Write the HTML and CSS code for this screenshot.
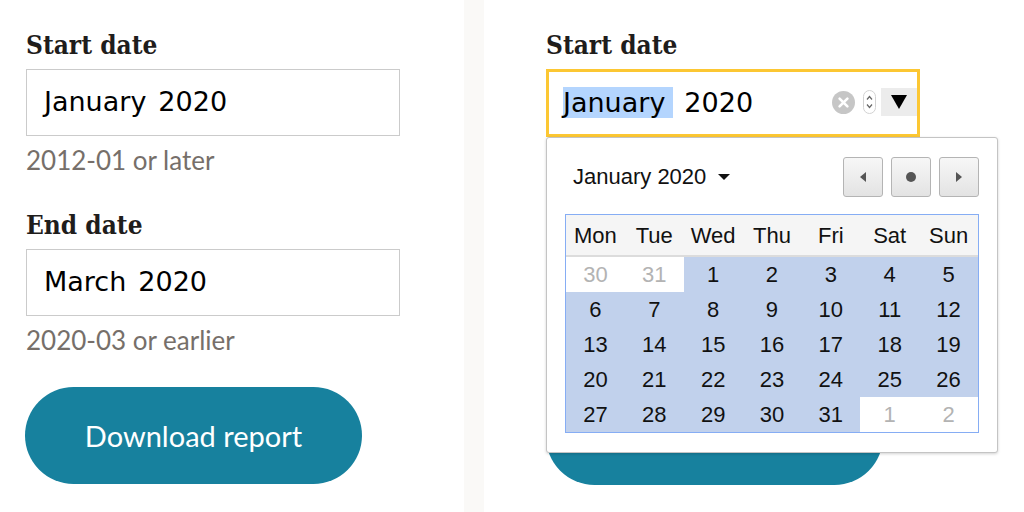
FILE: index.html
```html
<!DOCTYPE html>
<html lang="en">
<head>
<meta charset="utf-8">
<title>Date range</title>
<link rel="stylesheet" href="styles.css">
</head>
<body>
<div class="page">
  <section class="panel panel-left">
    <div class="field">
      <div class="label">Start date</div>
      <div class="input"><span class="seg">January</span><span class="seg">2020</span></div>
      <p class="hint">2012-01 or later</p>
    </div>
    <div class="field">
      <div class="label">End date</div>
      <div class="input"><span class="seg">March</span><span class="seg">2020</span></div>
      <p class="hint">2020-03 or earlier</p>
    </div>
    <button class="btn btn-left">Download report</button>
  </section>
  <div class="divider"></div>
  <section class="panel panel-right">
    <div class="field">
      <div class="label">Start date</div>
      <div class="input-wrap">
        <div class="input input-focus">
          <span class="seg seg-sel">January</span><span class="seg">2020</span>
          <span class="spacer"></span>
          <svg class="clear" width="23" height="23" viewBox="0 0 23 23"><circle cx="11.5" cy="11.5" r="11.5" fill="#c6c6c6"/><path d="M7.6 7.6l7.8 7.8M15.4 7.6l-7.8 7.8" stroke="#fff" stroke-width="2.6" stroke-linecap="round"/></svg>
          <svg class="spin" width="13" height="24" viewBox="0 0 13 24"><rect x="0.5" y="0.5" width="12" height="23" rx="6" fill="#fff" stroke="#d2d2d2"/><path d="M4 9.5l2.5-3 2.5 3M4 14.5l2.5 3 2.5-3" fill="none" stroke="#666" stroke-width="1.2"/></svg>
          <span class="drop"><svg width="16" height="14" viewBox="0 0 16 14"><path d="M0 0h16L8 14z" fill="#000"/></svg></span>
        </div>
        <div class="popup">
          <div class="popup-head">
            <div class="month">January 2020<svg class="caret" width="12" height="6" viewBox="0 0 12 6"><path d="M0 0h12L6 6z" fill="#111"/></svg></div>
            <div class="nav">
              <span class="nav-btn"><svg width="6" height="10" viewBox="0 0 6 10"><path d="M6 0v10L0 5z" fill="#555"/></svg></span>
              <span class="nav-btn"><svg width="10" height="10" viewBox="0 0 10 10"><circle cx="5" cy="5" r="5" fill="#555"/></svg></span>
              <span class="nav-btn"><svg width="6" height="10" viewBox="0 0 6 10"><path d="M0 0v10l6-5z" fill="#555"/></svg></span>
            </div>
          </div>
          <div class="cal">
            <div class="dow">Mon</div><div class="dow">Tue</div><div class="dow">Wed</div><div class="dow">Thu</div><div class="dow">Fri</div><div class="dow">Sat</div><div class="dow">Sun</div>
            <div class="day out">30</div><div class="day out">31</div><div class="day">1</div><div class="day">2</div><div class="day">3</div><div class="day">4</div><div class="day">5</div>
            <div class="day">6</div><div class="day">7</div><div class="day">8</div><div class="day">9</div><div class="day">10</div><div class="day">11</div><div class="day">12</div>
            <div class="day">13</div><div class="day">14</div><div class="day">15</div><div class="day">16</div><div class="day">17</div><div class="day">18</div><div class="day">19</div>
            <div class="day">20</div><div class="day">21</div><div class="day">22</div><div class="day">23</div><div class="day">24</div><div class="day">25</div><div class="day">26</div>
            <div class="day">27</div><div class="day">28</div><div class="day">29</div><div class="day">30</div><div class="day">31</div><div class="day out">1</div><div class="day out">2</div>
          </div>
        </div>
      </div>
      <p class="hint covered">2012-01 or later</p>
    </div>
    <div class="field covered">
      <div class="label">End date</div>
      <div class="input"><span class="seg">March</span><span class="seg">2020</span></div>
      <p class="hint">2020-03 or earlier</p>
    </div>
    <button class="btn"><span class="covered">Download report</span></button>
  </section>
</div>
</body>
</html>
```

FILE: styles.css
```css
* { box-sizing: border-box; }
html, body { margin: 0; padding: 0; background: #fff; }
body { width: 1024px; height: 512px; overflow: hidden; }

.page {
  display: flex;
  width: 1024px;
  height: 512px;
}

.panel {
  display: flex;
  flex-direction: column;
  padding-top: 30px;
  background: #fff;
}
.panel-left { width: 464px; padding-left: 26px; }
.panel-right { flex: 1; padding-left: 62px; }

.divider { width: 20px; background: #faf9f7; }

.field {
  display: flex;
  flex-direction: column;
  width: 374px;
  margin-bottom: 33px;
}

.covered { visibility: hidden; }

.label {
  font-family: "DejaVu Serif Condensed", "DejaVu Serif", serif;
  font-stretch: condensed;
  font-weight: bold;
  font-size: 26px;
  line-height: 30px;
  color: #1f1d1c;
  margin-bottom: 9px;
}

.input-wrap { position: relative; }

.input {
  display: flex;
  align-items: center;
  height: 67px;
  border: 1px solid #cbcbcb;
  padding-left: 17px;
  padding-bottom: 2px;
  font-family: "DejaVu Sans", Verdana, sans-serif;
  font-size: 27px;
  color: #000;
  background: #fff;
}
.input-focus {
  height: 68px;
  border: 3px solid #fcc733;
  padding-left: 14px;
  padding-right: 0;
  padding-bottom: 2px;
}

.seg { margin-right: 12px; }
.seg-sel { background: #b4d5fe; margin-right: 11px; padding-right: 8px; }
.spacer { flex: 1; }
.clear { margin-right: 8px; }
.spin { margin-right: 5px; }
.drop {
  width: 36px;
  height: 28px;
  background: #ececec;
  display: flex;
  align-items: center;
  justify-content: center;
}

.hint {
  margin: 7px 0 0;
  font-family: Lato, "Open Sans", sans-serif;
  font-size: 26px;
  line-height: 34px;
  color: #766f6a;
}

.btn {
  margin-top: -3px;
  width: 337px;
  height: 97px;
  border: none;
  border-radius: 49px;
  background: #17819e;
  color: #fff;
  font-family: Lato, "Open Sans", sans-serif;
  font-size: 29px;
  padding: 0;
}
.btn-left { margin-left: -1px; }

.popup {
  position: absolute;
  top: 100%;
  left: 0;
  width: 452px;
  height: 316px;
  background: #fff;
  border: 1px solid #c4c4c4;
  border-radius: 3px;
  box-shadow: 0 1px 3px rgba(0,0,0,0.18);
  padding: 19px 18px 18px;
  z-index: 5;
  font-family: "Liberation Sans", Arial, sans-serif;
  color: #111;
}

.popup-head {
  display: flex;
  justify-content: space-between;
  align-items: center;
  height: 40px;
  margin-bottom: 17px;
}
.month {
  display: flex;
  align-items: center;
  font-size: 22px;
  padding-left: 8px;
}
.caret { margin-left: 12px; }

.nav { display: flex; gap: 8px; }
.nav-btn {
  width: 40px;
  height: 40px;
  border: 1px solid #b4b4b4;
  border-radius: 3px;
  background: linear-gradient(#f7f7f7, #e3e3e3);
  display: flex;
  align-items: center;
  justify-content: center;
}

.cal {
  display: grid;
  grid-template-columns: repeat(7, 1fr);
  grid-template-rows: 42px repeat(5, 35px);
  border: 1px solid #86adf4;
  width: 414px;
}
.dow {
  background: #f5f5f5;
  border-bottom: 2px solid #dcdcdc;
  font-size: 22px;
  display: flex;
  align-items: center;
  justify-content: center;
  padding-top: 2px;
}
.day {
  background: #c1d1ec;
  font-size: 22px;
  display: flex;
  align-items: center;
  justify-content: center;
}
.day.out { background: #fff; color: #b3b3b3; }
```
